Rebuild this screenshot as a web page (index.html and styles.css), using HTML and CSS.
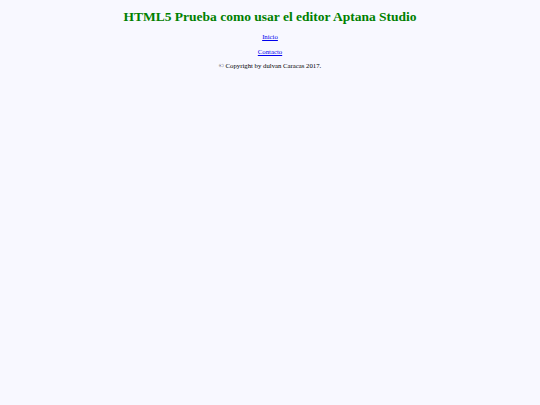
FILE: index.html
```html
<!DOCTYPE html>
<html lang="es">
<head>
<meta charset="utf-8">
<title>HTML5 Prueba</title>
<link rel="stylesheet" href="styles.css">
</head>
<body>
<header class="cabecera">
  <h1 class="titulo">HTML5 Prueba como usar el editor Aptana Studio</h1>
</header>
<nav class="menu">
  <p class="item"><a href="#">Inicio</a></p>
  <p class="item"><a href="#">Contacto</a></p>
</nav>
<footer class="pie">
  <p class="copy">© Copyright by dulvan Caracas 2017.</p>
</footer>
</body>
</html>
```
FILE: styles.css
```css
html { background: #f8f8ff; }
body {
  margin: 0;
  padding: 8px 0 0;
  font-family: "Liberation Serif", "Times New Roman", serif;
  text-align: center;
  color: #000;
}
.titulo {
  margin: 0 0 7px;
  font-size: 13.5px;
  line-height: 18px;
  color: #008000;
  font-weight: bold;
}
.item, .copy {
  margin: 0 0 6.5px;
  font-size: 6.75px;
  line-height: 8px;
}
.item a { color: #0000ee; }
```
